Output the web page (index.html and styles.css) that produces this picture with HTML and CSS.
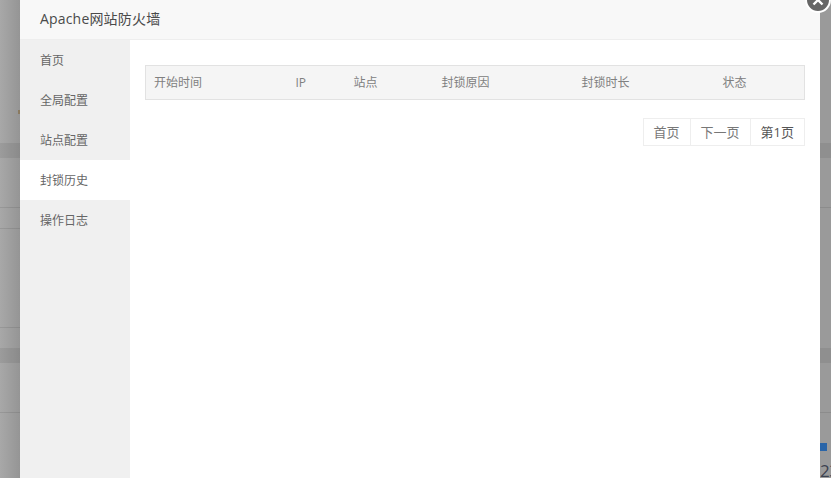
FILE: index.html
```html
<!DOCTYPE html>
<html lang="zh">
<head>
<meta charset="utf-8">
<title>Apache网站防火墙</title>
<link rel="stylesheet" href="styles.css">
</head>
<body>
<div class="backdrop">
  <div class="band band-a"></div>
  <div class="line line-a"></div>
  <div class="line short line-b"></div>
  <div class="line short line-c"></div>
  <div class="band band-b"></div>
  <div class="line line-d"></div>
  <div class="mark"></div>
  <div class="blue"></div>
  <div class="num">23</div>
</div>
<div class="dialog">
  <header class="title">Apache网站防火墙</header>
  <div class="body">
    <nav class="side">
      <div class="item">首页</div>
      <div class="item">全局配置</div>
      <div class="item">站点配置</div>
      <div class="item active">封锁历史</div>
      <div class="item">操作日志</div>
    </nav>
    <main class="content">
      <table class="grid">
        <thead>
          <tr><th class="c1">开始时间</th><th class="c2">IP</th><th class="c3">站点</th><th class="c4">封锁原因</th><th class="c5">封锁时长</th><th class="c6">状态</th></tr>
        </thead>
      </table>
      <div class="pager">
        <span class="page">首页</span><span class="page">下一页</span><span class="page cur">第1页</span>
      </div>
    </main>
  </div>
</div>
<div class="close"><svg width="12" height="12" viewBox="0 0 12 12"><path d="M1.5 1.5L10.500 10.500M10.500 1.500L1.500 10.500" stroke="#fff" stroke-width="2.400" fill="none"/></svg></div>
</body>
</html>
```
FILE: styles.css
```css
* { box-sizing: border-box; }
html, body { margin: 0; height: 100%; overflow: hidden; }
body { width: 831px; height: 478px; position: relative; font-family: "Open Sans", "Noto Sans CJK SC", sans-serif; background: #9a9a9a; }
.backdrop { position: absolute; inset: 0; background: linear-gradient(90deg, #a8a8a8, #959595 20px, #9a9a9a 820px); }
.band, .line, .mark, .blue, .num { position: absolute; }
.band { left: 0; right: 0; background: rgba(0, 0, 0, .07); height: 15px; }
.band-a { top: 143px; }
.band-b { top: 348px; }
.line { left: 0; right: 0; height: 1px; background: rgba(0, 0, 0, .09); }
.line.short { right: 100px; }
.line-a { top: 207px; }
.line-b { top: 228px; }
.line-c { top: 327px; }
.line-d { top: 412px; }
.mark { left: 18px; top: 110px; width: 2px; height: 4px; background: #8a7a60; }
.blue { left: 820px; top: 443px; width: 7px; height: 8px; background: #2a65a8; }
.num { left: 820px; top: 462px; font-size: 17px; letter-spacing: -.5px; color: #3c4250; line-height: 18px; }
.dialog { position: absolute; left: 20px; top: 0; width: 800px; height: 478px; background: #fff; display: flex; flex-direction: column; }
.title { height: 40px; flex: none; padding-left: 20px; line-height: 37px; font-size: 14px; letter-spacing: .18px; color: #4a4a4a; background: #f8f8f8; border-bottom: 1px solid #eee; }
.body { flex: 1; display: flex; min-height: 0; }
.side { width: 110px; flex: none; background: #f0f0f0; }
.item { height: 40px; line-height: 41px; padding-left: 20px; font-size: 12px; color: #666; }
.item.active { background: #fff; }
.content { flex: 1; padding: 25px 15px 0; min-width: 0; }
.grid { width: 660px; border-collapse: collapse; table-layout: fixed; }
.grid th { height: 34px; padding: 0 8px 1px; font-weight: 400; font-size: 12px; color: #808080; text-align: left; background: #f5f5f5; border-top: 1px solid #e2e2e2; border-bottom: 1px solid #e2e2e2; }
.grid th:first-child { border-left: 1px solid #e2e2e2; }
.grid th:last-child { border-right: 1px solid #e2e2e2; }
.c1 { width: 142px; }
.c2 { width: 58px; }
.c3 { width: 88px; }
.c4 { width: 140px; }
.c5 { width: 141px; }
.pager { display: flex; justify-content: flex-end; margin-top: 18px; }
.page { height: 28px; line-height: 26px; padding: 0 10px; font-size: 13px; color: #777; border: 1px solid #eee; margin-left: -1px; background: #fff; }
.page.cur { color: #555; }
.close { position: absolute; left: 805px; top: -13px; width: 26px; height: 26px; border-radius: 50%; background: #666; border: 2px solid #fff; display: flex; align-items: center; justify-content: center; }
```
